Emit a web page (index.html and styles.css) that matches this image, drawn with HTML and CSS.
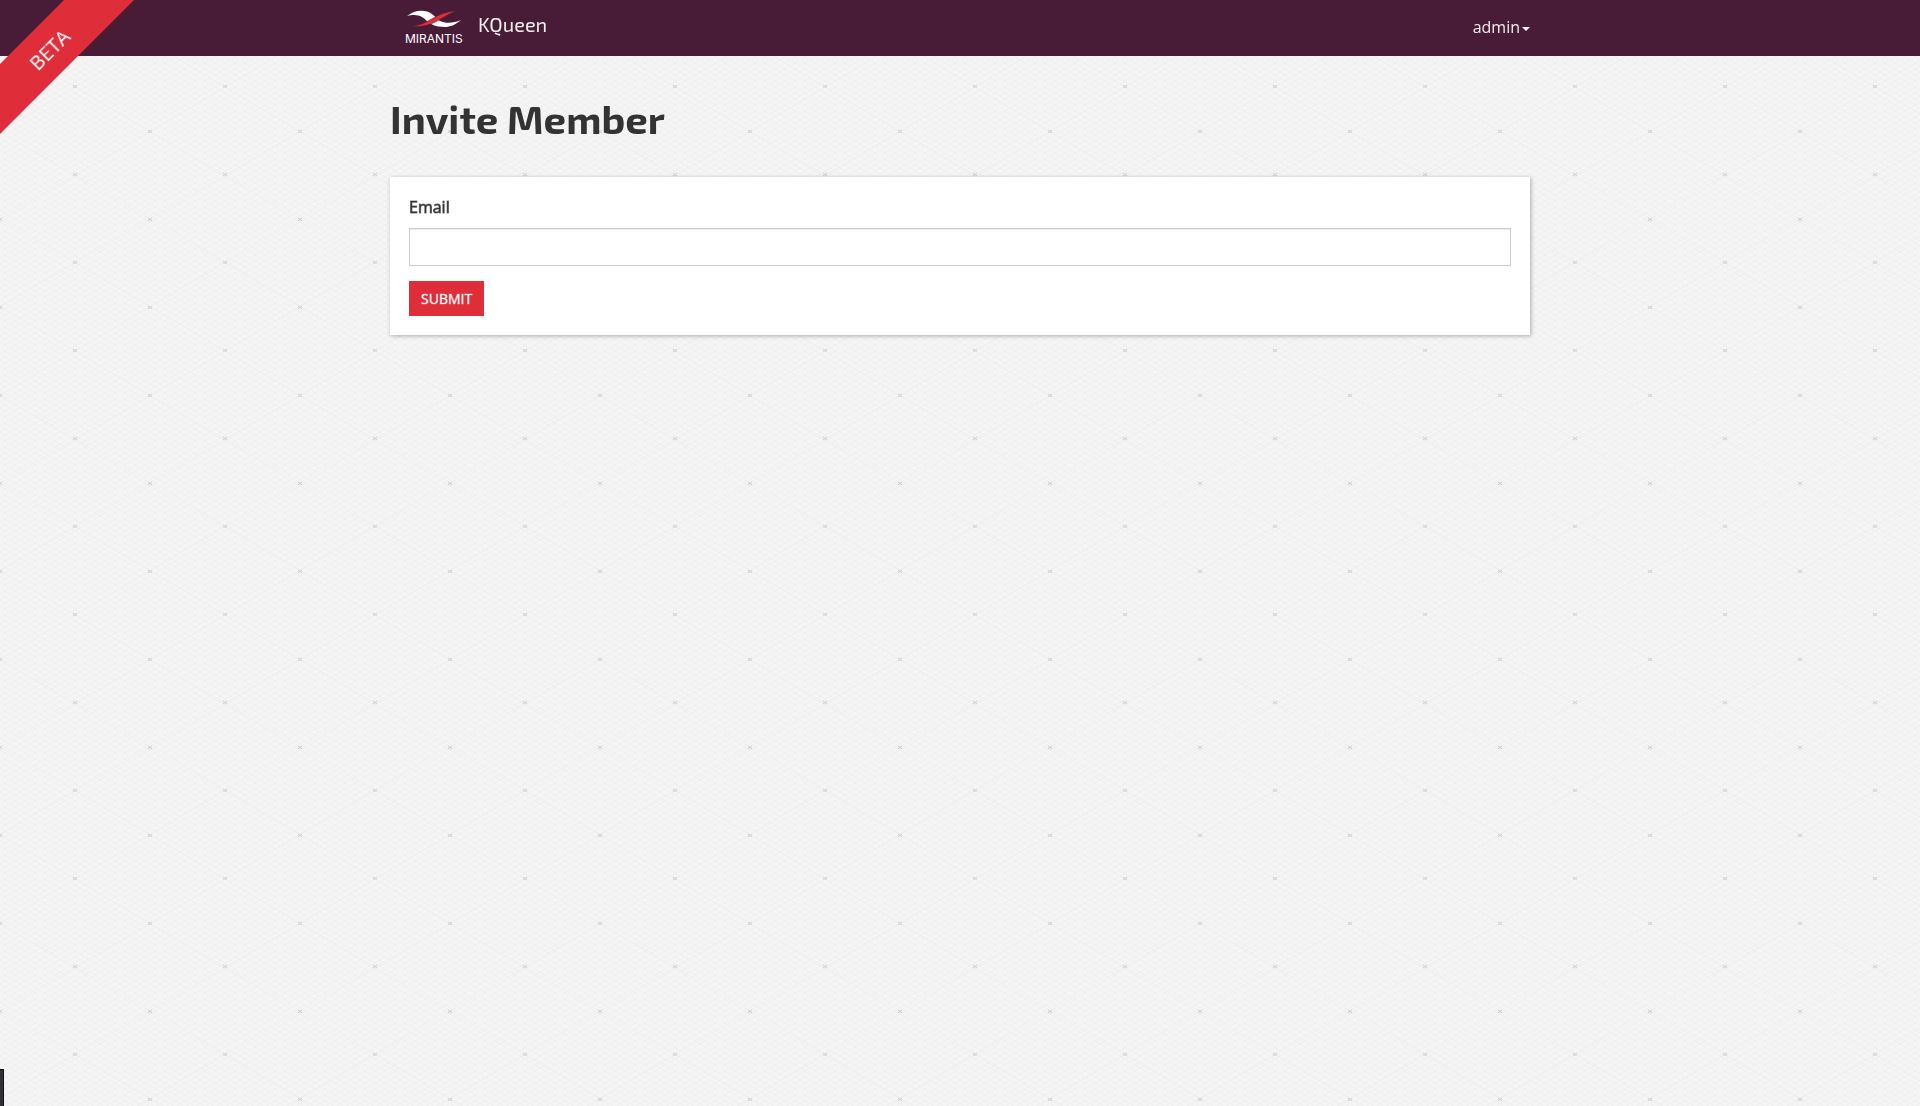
FILE: index.html
```html
<!DOCTYPE html>
<html lang="en">
<head>
<meta charset="utf-8">
<title>Invite Member - KQueen</title>
<meta name="viewport" content="width=device-width, initial-scale=1">
<link rel="stylesheet" href="styles.css">
</head>
<body>
<svg class="backdrop" aria-hidden="true">
  <defs>
    <pattern id="lattice" width="10" height="6" patternUnits="userSpaceOnUse">
      <path d="M0 0L10 6M0 6L10 0" stroke="#ebebeb" stroke-width="0.7"/>
    </pattern>
    <pattern id="cells" width="150" height="88" patternUnits="userSpaceOnUse">
      <path d="M0 43L75 87L150 43M0 43L75 -1L150 43" fill="none" stroke="#ececec" stroke-width="0.7"/>
      <path d="M-2 42L2 45M-2 45L2 42M148 42L152 45M148 45L152 42M73 85L77 88M73 88L77 85" stroke="#cccccc"/>
    </pattern>
  </defs>
  <rect width="100%" height="100%" fill="url(#lattice)"/>
  <rect width="100%" height="100%" fill="url(#cells)"/>
</svg>
<header class="navbar">
  <div class="container navbar-row">
    <a class="brand" href="#">
      <svg class="logo" width="60" height="36" viewBox="0 0 60 36" role="img" aria-label="Mirantis">
        <path d="M3 6C9 1 15 0 20 1C29 2 31 8 36 11C42 14 50 13 57 10C51 15 46 17 41 17C31 17 27 14 23 11C19 7 14 3 3 6Z" fill="#fff"/>
        <path d="M7 16C24 16 32 1 53 1C38 5 30 19 7 16Z" fill="#df2d3a" stroke="#481b36" stroke-width="0.5"/>
        <text class="logo-text" x="1" y="33">MIRANTIS</text>
      </svg>
      <span class="product">KQueen</span>
    </a>
    <button class="user-menu" type="button">admin<span class="caret"></span></button>
  </div>
</header>
<div class="ribbon"><span class="ribbon-text">BETA</span></div>
<main class="container">
  <h1>Invite Member</h1>
  <form class="card">
    <label for="email">Email</label>
    <input id="email" type="text">
    <button class="submit" type="submit">Submit</button>
  </form>
</main>
<div class="drawer-handle"></div>
</body>
</html>
```
FILE: styles.css
```css
* { box-sizing: border-box; }
body {
  margin: 0;
  min-height: 100vh;
  background: #f5f5f5;
  color: #333;
  font: 16px/24px "Open Sans", "Noto Sans", sans-serif;
}
.backdrop {
  position: fixed;
  inset: 0;
  z-index: -1;
  width: 100%;
  height: 100%;
}
.container {
  width: 100%;
  max-width: 1140px;
  margin: 0 auto;
}
.navbar {
  background: #481b36;
  color: #fff;
}
.navbar-row {
  display: flex;
  align-items: center;
  justify-content: space-between;
  height: 56px;
}
.brand {
  display: flex;
  align-items: center;
  gap: 14px;
  padding-left: 14px;
  color: #fff;
  text-decoration: none;
}
.logo { overflow: visible; }
.logo-text {
  fill: #fff;
  font: 12px Inter, sans-serif;
}
.product {
  padding-bottom: 8px;
  color: #eee;
  font-family: "Exo 2", "Open Sans", sans-serif;
  font-size: 20px;
}
.user-menu {
  display: flex;
  align-items: center;
  padding: 0 0 2px;
  border: 0;
  background: none;
  color: #eee;
  font: inherit;
}
.caret {
  margin: 4px 0 0 2px;
  border: 4px solid transparent;
  border-top-color: #fff;
  border-bottom: 0;
}
.ribbon {
  position: absolute;
  top: 0;
  left: 0;
  display: flex;
  align-items: center;
  justify-content: center;
  width: 134px;
  height: 134px;
  padding: 0 34px 34px 0;
  background: #df2d3a;
  clip-path: polygon(64px 0, 134px 0, 0 134px, 0 64px);
}
.ribbon-text {
  color: #fff;
  font-size: 20px;
  transform: rotate(-45deg);
}
h1 {
  margin: 38px 0 35px;
  font: bold 40px/48px "Exo 2", "Open Sans", sans-serif;
}
.card {
  display: flex;
  flex-direction: column;
  align-items: flex-start;
  padding: 19px;
  background: #fff;
  box-shadow: 1px 1px 4px rgba(0, 0, 0, 0.3);
}
label {
  line-height: 22px;
  -webkit-text-stroke: 1px rgba(51, 51, 51, 0.6);
}
input {
  width: 100%;
  height: 38px;
  margin: 10px 0 15px;
  padding: 6px 12px;
  border: 1px solid #ccc;
  background: #fff;
  box-shadow: inset 0 1px 1px rgba(0, 0, 0, 0.08);
  font: inherit;
}
.submit {
  height: 35px;
  padding: 0 12px;
  border: 0;
  background: #df2d3a;
  color: #fff;
  font: 14px/20px "Open Sans", sans-serif;
  text-transform: uppercase;
  -webkit-text-stroke: 1px rgba(255, 255, 255, 0.3);
}
.drawer-handle {
  position: fixed;
  bottom: 0;
  left: 0;
  width: 4px;
  height: 37px;
  border: 1px solid #111;
  border-width: 1px 1px 0 0;
  background: #303036;
}
```
